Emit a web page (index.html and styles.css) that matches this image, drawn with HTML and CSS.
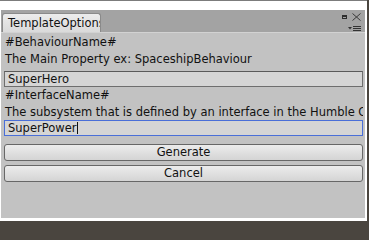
FILE: index.html
```html
<!DOCTYPE html>
<html lang="en">
<head>
  <meta charset="UTF-8">
  <title>TemplateOptions</title>
  <link rel="stylesheet" href="styles.css">
</head>
<body>
  <div class="window">
    <div class="tabbar">
      <div class="tab">TemplateOptions</div>
      <svg class="tools" width="22" height="21" viewBox="0 0 22 21">
        <rect x="2.5" y="5.5" width="4" height="3" fill="none" stroke="#2e2e2e"/>
        <line x1="2" y1="6" x2="7" y2="6" stroke="#2e2e2e" stroke-width="2"/>
        <path d="M12.5 3.5 L20.5 10.5 M20.5 3.5 L12.5 10.5" stroke="#3a3a3a" stroke-width="1"/>
        <path d="M8 17 L12 17 L10 19.5 Z" fill="#333"/>
        <path d="M13 16.5 H21 M13 18.5 H21 M13 20.5 H21" stroke="#333" stroke-width="1"/>
      </svg>
    </div>
    <div class="panel">
      <div class="label">#BehaviourName#</div>
      <div class="label">The Main Property ex: SpaceshipBehaviour</div>
      <div class="field first">SuperHero</div>
      <div class="label">#InterfaceName#</div>
      <div class="label short">The subsystem that is defined by an interface in the Humble Object</div>
      <div class="field focused">SuperPower<span class="caret"></span></div>
      <button class="btn first">Generate</button>
      <button class="btn">Cancel</button>
    </div>
  </div>
</body>
</html>
```
FILE: styles.css
```css
body { margin: 0; background: #4a453f; font-family: "DejaVu Sans", Verdana, sans-serif; font-size: 11.5px; color: #111; }
.window { width: 367px; height: 221px; box-sizing: border-box; background: #fff; border-top: 1px solid #7c7c7c; padding: 9px 2px 3px 1px; display: flex; flex-direction: column; }
.tabbar { height: 22px; background: #a3a3a3; display: flex; align-items: flex-end; border-bottom: 1px solid #d2d2d2; }
.tab { width: 92px; height: 18px; margin-left: 1px; padding-left: 5px; background: linear-gradient(#ececec, #dadada); border: 1px solid #8a8a8a; border-bottom: none; border-radius: 3px 3px 0 0; line-height: 18px; white-space: nowrap; overflow: hidden; }
.tools { margin-left: auto; margin-right: 3px; align-self: flex-start; }
.panel { flex: 1; background: #c2c2c2; padding: 1px 2px 0 3px; display: flex; flex-direction: column; overflow: hidden; }
.label { height: 17px; line-height: 17px; padding-left: 1px; white-space: nowrap; overflow: hidden; flex: none; }
.label.short { height: 16px; }
.field { height: 16px; flex: none; box-sizing: border-box; padding: 0 3px; line-height: 14px; border: 1px solid #6e6e6e; border-top-color: #5a5a5a; background: #d5d5d5; white-space: nowrap; display: flex; align-items: center; }
.field.first { margin-top: 3px; }
.field.focused { border-color: #4a6fd8; }
.caret { width: 1px; height: 12px; background: #111; margin-left: 1px; }
.btn { height: 17px; flex: none; margin: 4px 0 0 0; padding: 0; border: 1px solid #676767; border-radius: 3px; background: linear-gradient(#ececec, #d4d4d4); font: inherit; color: #111; line-height: 15px; }
.btn.first { margin-top: 8px; }
```
